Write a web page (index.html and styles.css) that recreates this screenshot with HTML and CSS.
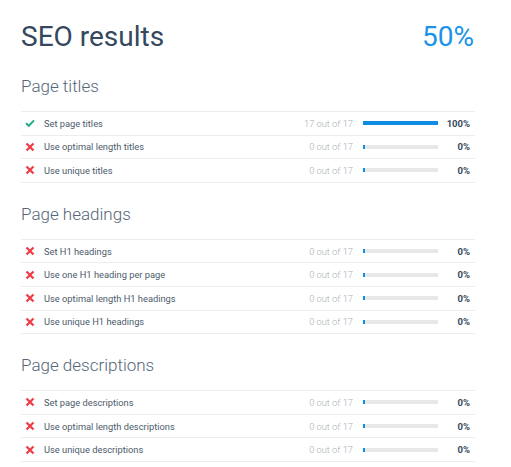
FILE: index.html
```html
<!DOCTYPE html>
<html>
<head>
<meta charset="utf-8">
<link rel="stylesheet" href="styles.css">
</head>
<body>
<div class="page">
  <header class="head">
    <h1 class="title">SEO results</h1>
    <div class="score">50%</div>
  </header>

  <section class="group">
    <h2 class="group-title">Page titles</h2>
    <ul class="rows">
      <li class="row">
        <span class="icon ok"><svg viewBox="0 0 10 10" width="10" height="10"><path d="M1 5.2 L3.8 7.8 L9 2.4" fill="none" stroke="currentColor" stroke-width="2"/></svg></span>
        <span class="label">Set page titles</span>
        <span class="count">17 out of 17</span>
        <span class="bar"><span class="fill" style="width:100%"></span></span>
        <span class="pct">100%</span>
      </li>
      <li class="row">
        <span class="icon bad"><svg viewBox="0 0 10 10" width="10" height="10"><path d="M1.5 1.5 L8.5 8.5 M8.5 1.5 L1.5 8.5" fill="none" stroke="currentColor" stroke-width="2.2"/></svg></span>
        <span class="label">Use optimal length titles</span>
        <span class="count">0 out of 17</span>
        <span class="bar"><span class="fill zero"></span></span>
        <span class="pct">0%</span>
      </li>
      <li class="row">
        <span class="icon bad"><svg viewBox="0 0 10 10" width="10" height="10"><path d="M1.5 1.5 L8.5 8.5 M8.5 1.5 L1.5 8.5" fill="none" stroke="currentColor" stroke-width="2.2"/></svg></span>
        <span class="label">Use unique titles</span>
        <span class="count">0 out of 17</span>
        <span class="bar"><span class="fill zero"></span></span>
        <span class="pct">0%</span>
      </li>
    </ul>
  </section>

  <section class="group">
    <h2 class="group-title">Page headings</h2>
    <ul class="rows">
      <li class="row">
        <span class="icon bad"><svg viewBox="0 0 10 10" width="10" height="10"><path d="M1.5 1.5 L8.5 8.5 M8.5 1.5 L1.5 8.5" fill="none" stroke="currentColor" stroke-width="2.2"/></svg></span>
        <span class="label">Set H1 headings</span>
        <span class="count">0 out of 17</span>
        <span class="bar"><span class="fill zero"></span></span>
        <span class="pct">0%</span>
      </li>
      <li class="row">
        <span class="icon bad"><svg viewBox="0 0 10 10" width="10" height="10"><path d="M1.5 1.5 L8.5 8.5 M8.5 1.5 L1.5 8.5" fill="none" stroke="currentColor" stroke-width="2.2"/></svg></span>
        <span class="label">Use one H1 heading per page</span>
        <span class="count">0 out of 17</span>
        <span class="bar"><span class="fill zero"></span></span>
        <span class="pct">0%</span>
      </li>
      <li class="row">
        <span class="icon bad"><svg viewBox="0 0 10 10" width="10" height="10"><path d="M1.5 1.5 L8.5 8.5 M8.5 1.5 L1.5 8.5" fill="none" stroke="currentColor" stroke-width="2.2"/></svg></span>
        <span class="label">Use optimal length H1 headings</span>
        <span class="count">0 out of 17</span>
        <span class="bar"><span class="fill zero"></span></span>
        <span class="pct">0%</span>
      </li>
      <li class="row">
        <span class="icon bad"><svg viewBox="0 0 10 10" width="10" height="10"><path d="M1.5 1.5 L8.5 8.5 M8.5 1.5 L1.5 8.5" fill="none" stroke="currentColor" stroke-width="2.2"/></svg></span>
        <span class="label">Use unique H1 headings</span>
        <span class="count">0 out of 17</span>
        <span class="bar"><span class="fill zero"></span></span>
        <span class="pct">0%</span>
      </li>
    </ul>
  </section>

  <section class="group">
    <h2 class="group-title">Page descriptions</h2>
    <ul class="rows">
      <li class="row">
        <span class="icon bad"><svg viewBox="0 0 10 10" width="10" height="10"><path d="M1.5 1.5 L8.5 8.5 M8.5 1.5 L1.5 8.5" fill="none" stroke="currentColor" stroke-width="2.2"/></svg></span>
        <span class="label">Set page descriptions</span>
        <span class="count">0 out of 17</span>
        <span class="bar"><span class="fill zero"></span></span>
        <span class="pct">0%</span>
      </li>
      <li class="row">
        <span class="icon bad"><svg viewBox="0 0 10 10" width="10" height="10"><path d="M1.5 1.5 L8.5 8.5 M8.5 1.5 L1.5 8.5" fill="none" stroke="currentColor" stroke-width="2.2"/></svg></span>
        <span class="label">Use optimal length descriptions</span>
        <span class="count">0 out of 17</span>
        <span class="bar"><span class="fill zero"></span></span>
        <span class="pct">0%</span>
      </li>
      <li class="row">
        <span class="icon bad"><svg viewBox="0 0 10 10" width="10" height="10"><path d="M1.5 1.5 L8.5 8.5 M8.5 1.5 L1.5 8.5" fill="none" stroke="currentColor" stroke-width="2.2"/></svg></span>
        <span class="label">Use unique descriptions</span>
        <span class="count">0 out of 17</span>
        <span class="bar"><span class="fill zero"></span></span>
        <span class="pct">0%</span>
      </li>
    </ul>
  </section>
</div>
</body>
</html>
```

FILE: styles.css
```css
html, body {
  margin: 0;
  padding: 0;
  background: #ffffff;
}

body {
  font-family: Roboto, "Liberation Sans", sans-serif;
  color: #34495e;
}

.page {
  width: 454px;
  padding: 19px 0 0 21px;
}

.head {
  display: flex;
  justify-content: space-between;
  align-items: baseline;
  height: 36px;
  margin-bottom: 21px;
}

.title {
  margin: 0;
  font-size: 28px;
  line-height: 36px;
  font-weight: 400;
  color: #34495e;
}

.score {
  font-size: 28px;
  line-height: 36px;
  color: #1a93e8;
  padding-right: 1px;
}

.group {
  margin-bottom: 21px;
}

.group-title {
  margin: 0 0 15px 0;
  font-size: 17px;
  line-height: 20px;
  font-weight: 300;
  color: #556677;
}

.rows {
  list-style: none;
  margin: 0;
  padding: 0;
  border-top: 1px solid #ebedef;
}

.row {
  display: flex;
  align-items: center;
  height: 22.6px;
  border-bottom: 1px solid #ebedef;
  padding: 0 5px 0 4px;
  font-size: 9.3px;
}

.icon {
  width: 10px;
  height: 10px;
  display: flex;
  flex: none;
  margin-right: 9px;
}

.icon.ok { color: #1fae8a; }
.icon.bad { color: #f03a45; }

.label {
  flex: 1;
  color: #4c5b6a;
}

.count {
  color: #a7aeb5;
  font-weight: 300;
  margin-right: 10px;
}

.bar {
  width: 75px;
  height: 4px;
  background: #e8e8e8;
  display: flex;
  flex: none;
}

.fill {
  display: block;
  height: 100%;
  background: #0d8de6;
}

.fill.zero {
  width: 2px;
}

.pct {
  width: 32px;
  text-align: right;
  font-size: 9.5px;
  font-weight: 700;
  color: #34495e;
}
```
